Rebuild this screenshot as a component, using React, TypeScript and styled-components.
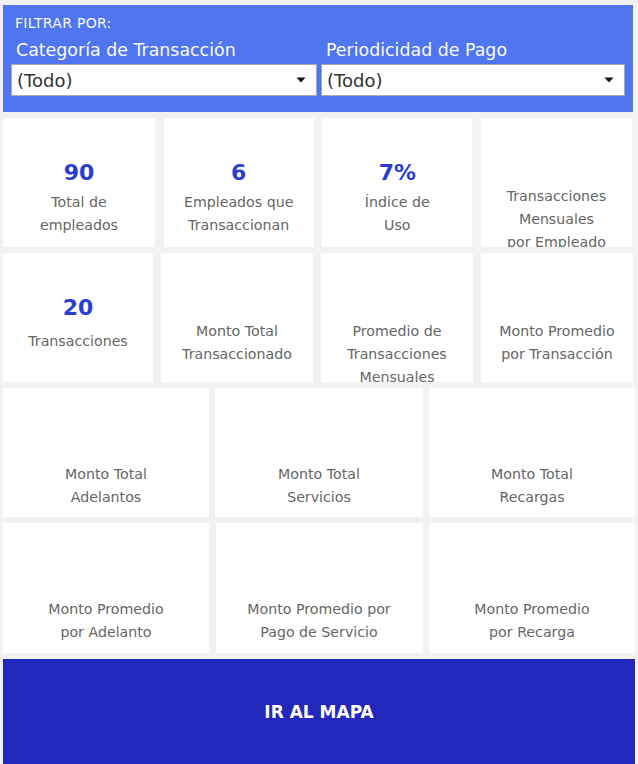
import React from "react";
import styled, { createGlobalStyle } from "styled-components";

const GlobalStyle = createGlobalStyle`
  html, body {
    margin: 0;
    padding: 0;
    background: #f2f2f2;
  }
  body {
    font-family: "DejaVu Sans", Verdana, sans-serif;
  }
`;

const Page = styled.div`
  display: flex;
  flex-direction: column;
  gap: 6px;
  padding: 5px 0 0 3px;
  width: 638px;
  box-sizing: border-box;
`;

const Header = styled.header`
  width: 630px;
  height: 107px;
  box-sizing: border-box;
  background: #4f76ef;
  padding: 9px 8px 0 8px;
  color: #fafbff;
`;

const FilterTitle = styled.div`
  font-size: 14px;
  letter-spacing: 0.3px;
  line-height: 18px;
  padding-left: 4px;
  text-transform: uppercase;
`;

const FilterGrid = styled.div`
  display: grid;
  grid-template-columns: 306px 304px;
  column-gap: 4px;
  margin-top: 7px;
`;

const Filter = styled.div`
  display: flex;
  flex-direction: column;
  gap: 3px;
`;

const FilterLabel = styled.div`
  font-size: 17.4px;
  line-height: 22px;
  padding-left: 5px;
  white-space: nowrap;
`;

const Dropdown = styled.div`
  height: 32px;
  box-sizing: border-box;
  background: #fff;
  border: 1px solid #a8a8a8;
  display: flex;
  align-items: center;
  justify-content: space-between;
  padding: 0 10px 0 5px;
  color: #333;
  font-size: 18px;
`;

const Row = styled.div<{ $cols: string; $w: number; $h: number }>`
  display: grid;
  grid-template-columns: ${(p) => p.$cols};
  justify-content: space-between;
  width: ${(p) => p.$w}px;
  height: ${(p) => p.$h}px;
`;

const Card = styled.div<{ $pt: number }>`
  background: #fff;
  padding-top: ${(p) => p.$pt}px;
  box-sizing: border-box;
  overflow: hidden;
  display: flex;
  flex-direction: column;
  align-items: center;
  text-align: center;
`;

const Value = styled.div<{ $mb: number }>`
  font-size: 22px;
  font-weight: bold;
  line-height: 26px;
  color: #2c3ecf;
  margin-bottom: ${(p) => p.$mb}px;
`;

const Label = styled.div`
  font-size: 14.2px;
  line-height: 23px;
  color: #666;
  white-space: pre-line;
`;

const MapButton = styled.button`
  width: 632px;
  height: 105px;
  background: #2328bd;
  color: #fff;
  border: 0;
  padding: 0;
  font-family: "DejaVu Sans", Verdana, sans-serif;
  font-weight: bold;
  font-size: 17px;
  cursor: pointer;
`;

const Caret = () => (
  <svg width="10" height="6" viewBox="0 0 10 6">
    <path d="M0.5 0.5 L9.5 0.5 L5 5.5 Z" fill="#111" />
  </svg>
);

type Kpi = { value?: string; label: string; gap?: number };

const rows: { cols: string; w: number; h: number; pt: number; items: Kpi[] }[] = [
  {
    cols: "152px 150px 150px 151px",
    w: 629,
    h: 129,
    pt: 67,
    items: [
      { value: "90", label: "Total de\nempleados" },
      { value: "6", label: "Empleados que\nTransaccionan" },
      { value: "7%", label: "Índice de\nUso" },
      { label: "Transacciones\nMensuales\npor Empleado" },
    ],
  },
  {
    cols: "150px 152px 152px 152px",
    w: 630,
    h: 129,
    pt: 67,
    items: [
      { value: "20", label: "Transacciones", gap: 9 },
      { label: "Monto Total\nTransaccionado" },
      { label: "Promedio de\nTransacciones\nMensuales" },
      { label: "Monto Promedio\npor Transacción" },
    ],
  },
  {
    cols: "206px 208px 206px",
    w: 632,
    h: 129,
    pt: 75,
    items: [
      { label: "Monto Total\nAdelantos" },
      { label: "Monto Total\nServicios" },
      { label: "Monto Total\nRecargas" },
    ],
  },
  {
    cols: "206px 207px 206px",
    w: 632,
    h: 130,
    pt: 75,
    items: [
      { label: "Monto Promedio\npor Adelanto" },
      { label: "Monto Promedio por\nPago de Servicio" },
      { label: "Monto Promedio\npor Recarga" },
    ],
  },
];

export default function App() {
  return (
    <>
      <GlobalStyle />
      <Page>
        <Header>
          <FilterTitle>Filtrar por:</FilterTitle>
          <FilterGrid>
            <Filter>
              <FilterLabel>Categoría de Transacción</FilterLabel>
              <Dropdown>
                <span>(Todo)</span>
                <Caret />
              </Dropdown>
            </Filter>
            <Filter>
              <FilterLabel>Periodicidad de Pago</FilterLabel>
              <Dropdown>
                <span>(Todo)</span>
                <Caret />
              </Dropdown>
            </Filter>
          </FilterGrid>
        </Header>
        {rows.map((row, i) => (
          <Row key={i} $cols={row.cols} $w={row.w} $h={row.h}>
            {row.items.map((item, j) => (
              <Card key={j} $pt={item.value ? 42 : row.pt}>
                {item.value && <Value $mb={item.gap ?? 5}>{item.value}</Value>}
                <Label>{item.label}</Label>
              </Card>
            ))}
          </Row>
        ))}
        <MapButton>IR AL MAPA</MapButton>
      </Page>
    </>
  );
}
